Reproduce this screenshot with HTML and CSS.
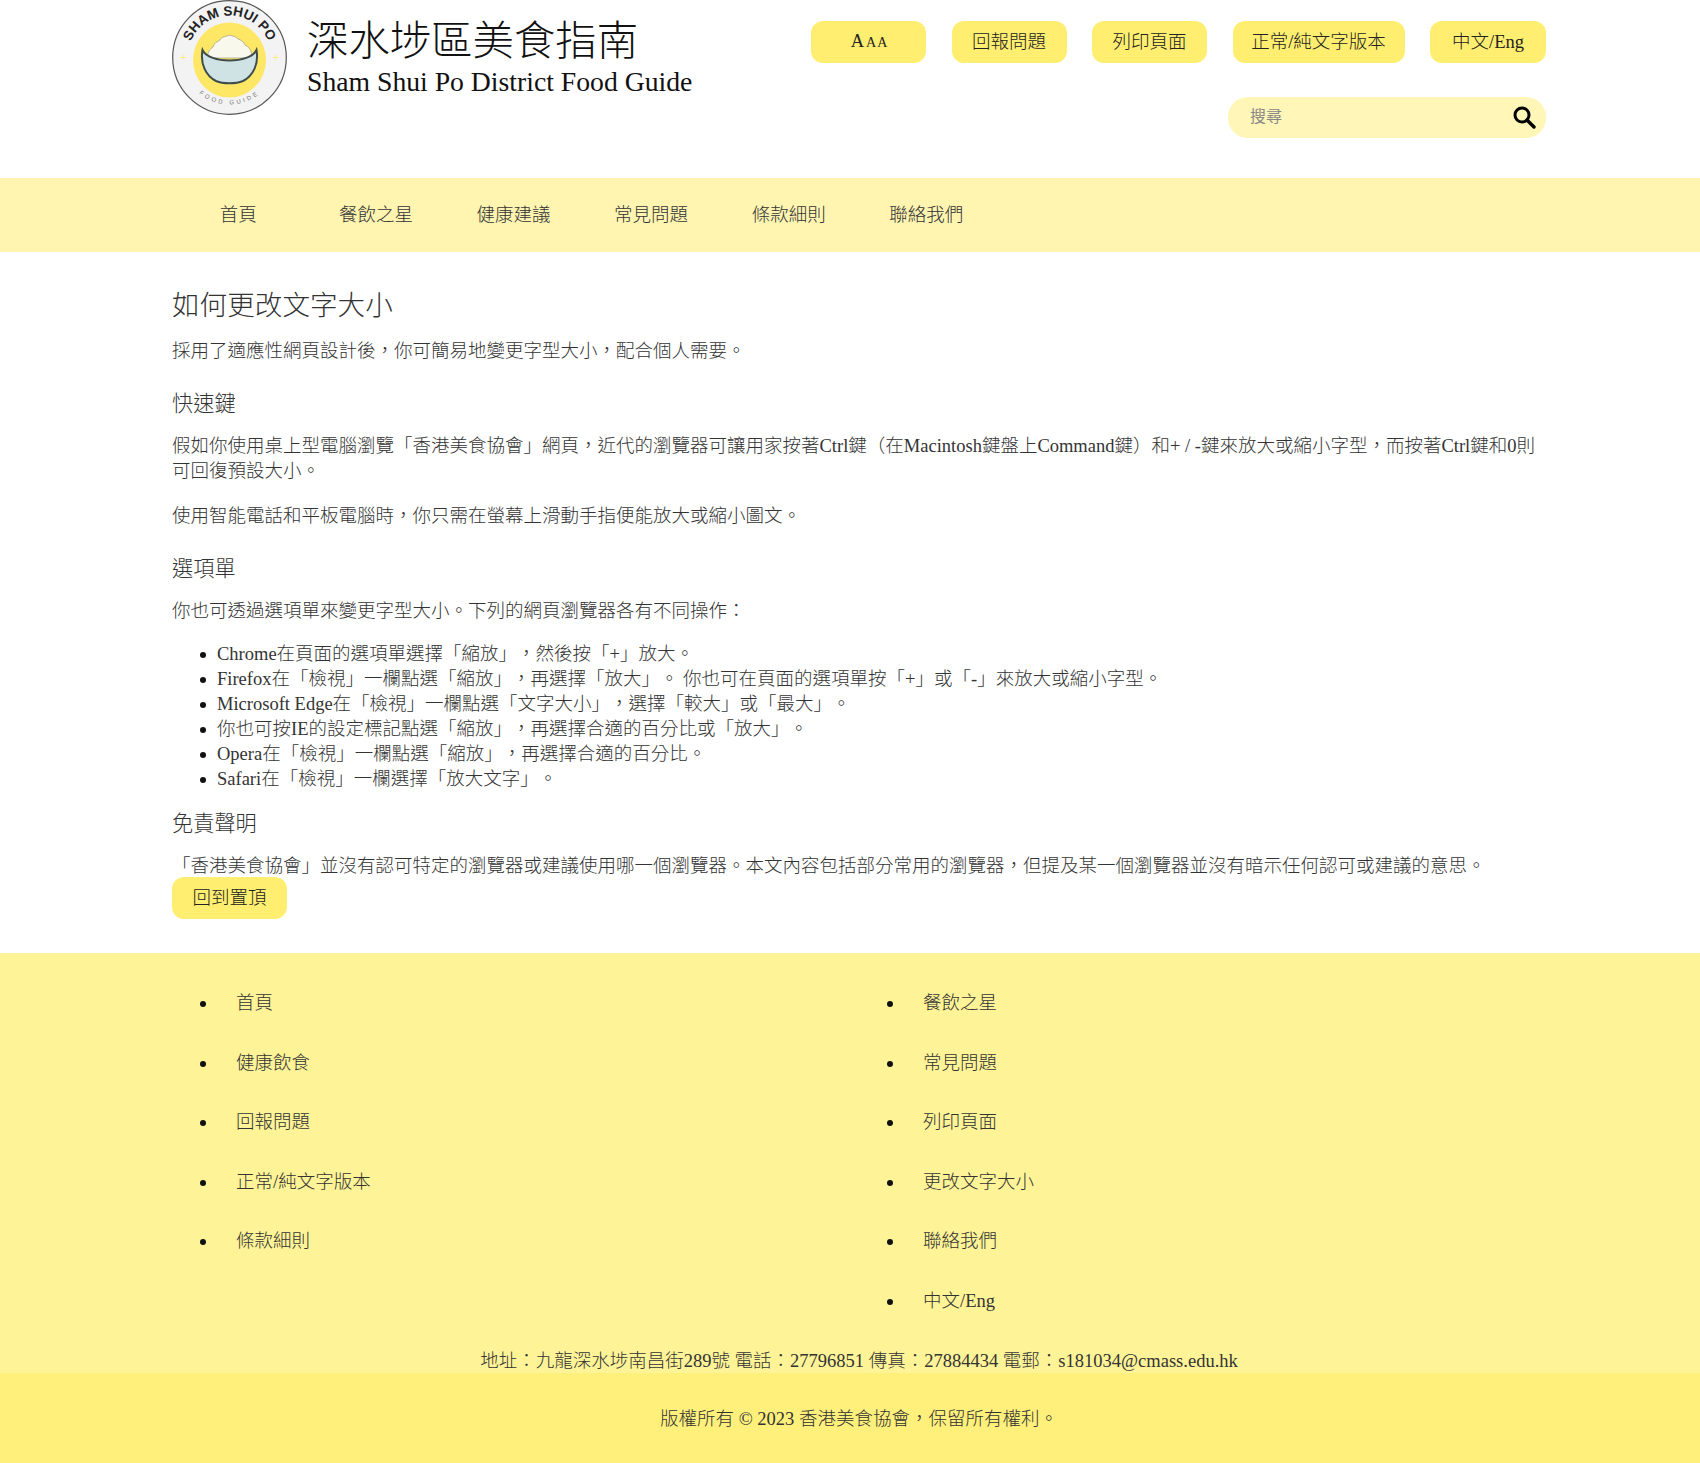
FILE: index.html
```html
<!DOCTYPE html>
<html lang="zh-Hant">
<head>
    <meta charset="UTF-8">
    <meta name="viewport" content="width=device-width, initial-scale=1.0">
    <title>深水埗區美食指南</title>
    <link rel="stylesheet" href="styles.css">
</head>
<body>

    <header class="site-header">
        <div class="brand">
            <svg class="logo" viewBox="0 0 115 115" width="115" height="115">
                <defs>
                    <path id="arcTop" d="M15.5 57.5 A42 42 0 0 1 99.5 57.5"></path>
                    <path id="arcBottom" d="M10.5 57.5 A47 47 0 0 0 104.5 57.5"></path>
                </defs>
                <circle cx="57.5" cy="57.5" r="56.8" fill="#f3f3f3" stroke="#555" stroke-width="1.2"></circle>
                <ellipse cx="57.5" cy="60" rx="36.5" ry="37.5" fill="#ffe766"></ellipse>
                <path d="M36 58 C35 52 38 49 41 47 C42 43 45 42 48 40 C50 36 54 37 57 35 C60 36 64 36 66 39 C69 40 72 42 73 45 C77 47 80 50 80 58 Z" fill="#f8f8ec" stroke="#8a8f80" stroke-width="0.6"></path>
                <path d="M30.5 50 C37 64 78 64 84.5 50 C87 64 81 76 71 81 C64 84 51 84 44 81 C34 76 28 64 30.5 50 Z" fill="#cfe3e4" stroke="#3f4c4c" stroke-width="2"></path>
                <text class="logo-top"><textPath href="#arcTop" startOffset="50%" text-anchor="middle">SHAM SHUI PO</textPath></text>
                <text class="logo-bottom"><textPath href="#arcBottom" startOffset="50%" text-anchor="middle">FOOD GUIDE</textPath></text>
                <text class="logo-star" x="8.6" y="60.5">+</text>
                <text class="logo-star" x="101" y="60.5">+</text>
            </svg>
            <div class="brand-text">
                <div class="brand-zh">深水埗區美食指南</div>
                <div class="brand-en">Sham Shui Po District Food Guide</div>
            </div>
        </div>
        <div class="tools">
            <div class="tool-row">
                <button class="btn btn-size">A<span class="small-a">AA</span></button>
                <button class="btn">回報問題</button>
                <button class="btn">列印頁面</button>
                <button class="btn btn-wide">正常/純文字版本</button>
                <button class="btn btn-lang">中文/Eng</button>
            </div>
            <form class="search">
                <input type="text" placeholder="搜尋">
                <svg viewBox="0 0 24 24" width="24" height="24">
                    <circle cx="10" cy="10" r="7" fill="none" stroke="#000" stroke-width="3"></circle>
                    <path d="M15 15 L22 22" stroke="#000" stroke-width="3.4" stroke-linecap="round"></path>
                </svg>
            </form>
        </div>
    </header>

    <nav class="main-nav">
        <a href="#">首頁</a>
        <a href="#">餐飲之星</a>
        <a href="#">健康建議</a>
        <a href="#">常見問題</a>
        <a href="#">條款細則</a>
        <a href="#">聯絡我們</a>
    </nav>

    <main class="content">
        <h1>如何更改文字大小</h1>
        <p>採用了適應性網頁設計後，你可簡易地變更字型大小，配合個人需要。</p>

        <h3>快速鍵</h3>
        <p>假如你使用桌上型電腦瀏覽「香港美食協會」網頁，近代的瀏覽器可讓用家按著Ctrl鍵（在Macintosh鍵盤上Command鍵）和+ / -鍵來放大或縮小字型，而按著Ctrl鍵和0則可回復預設大小。</p>
        <p>使用智能電話和平板電腦時，你只需在螢幕上滑動手指便能放大或縮小圖文。</p>

        <h3>選項單</h3>
        <p>你也可透過選項單來變更字型大小。下列的網頁瀏覽器各有不同操作：</p>
        <ul class="steps">
            <li>Chrome在頁面的選項單選擇「縮放」，然後按「+」放大。</li>
            <li>Firefox在「檢視」一欄點選「縮放」，再選擇「放大」。 你也可在頁面的選項單按「+」或「-」來放大或縮小字型。</li>
            <li>Microsoft Edge在「檢視」一欄點選「文字大小」，選擇「較大」或「最大」。</li>
            <li>你也可按IE的設定標記點選「縮放」，再選擇合適的百分比或「放大」。</li>
            <li>Opera在「檢視」一欄點選「縮放」，再選擇合適的百分比。</li>
            <li>Safari在「檢視」一欄選擇「放大文字」。</li>
        </ul>

        <h3 class="after-list">免責聲明</h3>
        <p class="last">「香港美食協會」並沒有認可特定的瀏覽器或建議使用哪一個瀏覽器。本文內容包括部分常用的瀏覽器，但提及某一個瀏覽器並沒有暗示任何認可或建議的意思。</p>
        <button class="btn btn-top">回到置頂</button>
    </main>

    <footer class="site-footer">
        <ul class="footer-links">
            <li>首頁</li>
            <li>餐飲之星</li>
            <li>健康飲食</li>
            <li>常見問題</li>
            <li>回報問題</li>
            <li>列印頁面</li>
            <li>正常/純文字版本</li>
            <li>更改文字大小</li>
            <li>條款細則</li>
            <li>聯絡我們</li>
            <li class="spacer"></li>
            <li>中文/Eng</li>
        </ul>
        <div class="address">地址：九龍深水埗南昌街289號 電話：27796851 傳真：27884434 電郵：s181034@cmass.edu.hk</div>
        <div class="copyright">版權所有 © 2023 香港美食協會，保留所有權利。</div>
    </footer>

</body>
</html>
```

FILE: styles.css
```css
* {
    margin: 0;
    padding: 0;
    box-sizing: border-box;
}

body {
    font-family: "Liberation Serif", "Noto Sans CJK TC", serif;
    font-size: 18.5px;
    font-weight: 300;
    line-height: 25px;
    color: #333;
    background-color: #fff;
    text-spacing-trim: space-all;
}

/* header */
.site-header {
    height: 178px;
    padding: 0 154px 0 172px;
    display: flex;
    justify-content: space-between;
}

.brand {
    display: flex;
    align-items: flex-start;
    gap: 20px;
}

.logo-top {
    font-family: "Liberation Sans", sans-serif;
    font-size: 13.5px;
    font-weight: bold;
    fill: #222;
}

.logo-bottom {
    font-family: "Liberation Sans", sans-serif;
    font-size: 6px;
    letter-spacing: 2.8px;
    fill: #777;
}

.logo-star {
    font-family: "Liberation Sans", sans-serif;
    font-size: 10px;
    fill: #ffe97a;
}

.brand-zh {
    margin-top: 16px;
    font-size: 41.4px;
    line-height: 50px;
    color: #111;
}

.brand-en {
    font-size: 27.7px;
    line-height: 32px;
    color: #111;
}

.tools {
    display: flex;
    flex-direction: column;
    align-items: flex-end;
    padding-top: 21px;
}

.tool-row {
    display: flex;
    gap: 25.5px;
}

.btn {
    width: 115px;
    height: 42px;
    padding-bottom: 5px;
    border: none;
    border-radius: 12px;
    background-color: #ffee70;
    color: #222;
    font-family: inherit;
    font-size: 18.5px;
    font-weight: 300;
    cursor: pointer;
}

.btn-wide {
    width: 172px;
}

.btn-lang {
    width: 116px;
}

.btn-size {
    padding: 0 0 2px 2px;
}

.small-a {
    font-size: 14px;
    letter-spacing: 1px;
    margin-left: 2px;
}

.search {
    margin-top: 34px;
    width: 318px;
    height: 41px;
    padding: 0 10px 0 22px;
    border-radius: 20px;
    background-color: #fff6b8;
    display: flex;
    align-items: center;
}

.search input {
    flex: 1;
    min-width: 0;
    height: 38px;
    margin-bottom: 1px;
    border: none;
    outline: none;
    background: none;
    font-family: inherit;
    font-size: 16px;
}

.search input::placeholder {
    color: #888;
}

.search svg {
    margin-bottom: 2px;
}

/* nav */
.main-nav {
    height: 74px;
    padding-left: 169.5px;
    background-color: #fff5b1;
    display: flex;
    align-items: center;
}

.main-nav a {
    width: 137.6px;
    text-align: center;
    color: #333;
    text-decoration: none;
}

/* content */
.content {
    padding: 37px 154px 34px 172px;
}

h1 {
    font-size: 27.6px;
    font-weight: 300;
    line-height: 34px;
    margin-bottom: 16px;
}

h3 {
    font-size: 21.2px;
    font-weight: 300;
    line-height: 28px;
    margin-top: 26px;
    margin-bottom: 16px;
}

h3.after-list {
    margin-top: 18px;
}

.content p {
    margin-bottom: 20px;
}

.content p.last {
    margin-bottom: -2px;
}

.steps {
    list-style: none;
    padding-left: 45px;
    margin-top: -2px;
}

.steps li,
.footer-links li {
    position: relative;
}

/* bullets are larger than the browser's disc */
.steps li::before,
.footer-links li::before {
    content: "";
    position: absolute;
    top: 10px;
    left: -17px;
    width: 6px;
    height: 6px;
    border-radius: 50%;
    background-color: #111;
}

.btn-top {
    display: block;
    position: relative;
}

/* footer */
.site-footer {
    background-color: #fff397;
}

.footer-links {
    list-style: none;
    padding: 21px 154px 0 172px;
    display: grid;
    grid-template-columns: 1fr 1fr;
}

.footer-links li {
    height: 59.6px;
    line-height: 59.6px;
    margin-left: 64px;
}

.footer-links li::before {
    top: 27px;
    left: -36px;
}

.footer-links li.spacer::before {
    display: none;
}

.address {
    text-align: center;
    margin-top: 18.4px;
    padding-left: 18px;
    height: 23px;
    line-height: 23px;
}

.copyright {
    height: 92px;
    line-height: 92px;
    padding-left: 18px;
    text-align: center;
    background-color: #fff07c;
}
```
